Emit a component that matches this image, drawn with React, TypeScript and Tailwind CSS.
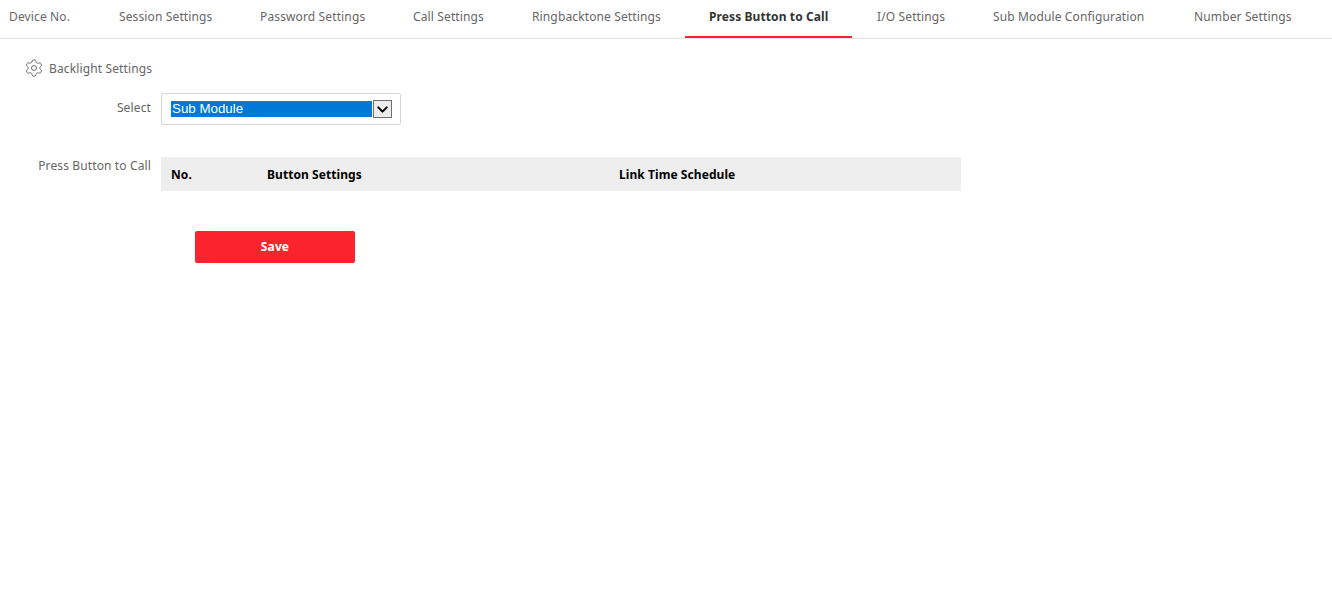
import { ChevronDown, Settings } from "lucide-react";

const tabs = [
  { label: "Device No.", cls: "w-[95px] pl-[9px]" },
  { label: "Session Settings", cls: "w-[141px] pl-6" },
  { label: "Password Settings", cls: "w-[153px] pl-6" },
  { label: "Call Settings", cls: "w-[119px] pl-6" },
  { label: "Ringbacktone Settings", cls: "w-[177px] pl-6" },
  { label: "Press Button to Call", cls: "w-[167px] pl-6" },
  { label: "I/O Settings", cls: "w-[117px] pl-[25px]" },
  { label: "Sub Module Configuration", cls: "w-[201px] pl-6" },
  { label: "Number Settings", cls: "w-[162px] pl-6" },
];

function App() {
  return (
    <div className="min-h-[592px] w-[1332px] bg-white text-[12px] tracking-[0.13px] text-[#666] font-['Noto_Sans','Open_Sans',sans-serif]">
      {/* Tabs */}
      <div className="flex h-[39px] border-b border-[#e5e5e5]">
        {tabs.map((tab) => {
          const active = tab.label === "Press Button to Call";
          return (
            <div
              key={tab.label}
              className={`h-[38px] pt-[8px] leading-[17px] whitespace-nowrap ${tab.cls} ${
                active ? "border-b-2 border-[#f5222d] font-bold tracking-[0.1px] text-[#333]" : ""
              }`}
            >
              {tab.label}
            </div>
          );
        })}
      </div>

      {/* Section title */}
      <div className="flex items-center gap-[5px] pl-[24px] pt-[17px] h-[41px]">
        <Settings size={20} strokeWidth={1.1} className="text-[#666]" />
        <span className="leading-[17px]">Backlight Settings</span>
      </div>

      {/* Select row */}
      <div className="flex mt-[13px]">
        <div className="w-[151px] text-right pt-[6px] leading-[17px]">Select</div>
        <div className="ml-[10px] flex h-[32px] w-[240px] items-center rounded-[2px] border border-[#d5d5d5] pl-[9px]">
          <div className="h-[16px] w-[201px] bg-[#0078d7] pl-px text-[13.33px] tracking-normal leading-[16px] text-white font-['Liberation_Sans',sans-serif]">
            Sub Module
          </div>
          <div className="ml-px flex h-[18px] w-[19px] items-center justify-center border border-[#707070] bg-[#ececec]">
            <ChevronDown size={17} strokeWidth={2.8} className="text-black" />
          </div>
        </div>
      </div>

      {/* Table row */}
      <div className="flex mt-[32px]">
        <div className="w-[151px] text-right leading-[17px] whitespace-nowrap">Press Button to Call</div>
        <div className="ml-[10px] flex h-[34px] w-[800px] items-center bg-[#eeeeee] font-bold tracking-[0.07px] text-black leading-[17px]">
          <div className="w-[106px] pl-[10px]">No.</div>
          <div className="w-[352px]">Button Settings</div>
          <div>Link Time Schedule</div>
        </div>
      </div>

      {/* Save */}
      <div className="mt-[40px] pl-[195px]">
        <button className="h-[32px] w-[160px] rounded-[2px] bg-[#fb242e] font-bold text-white">Save</button>
      </div>
    </div>
  );
}

export default App;
